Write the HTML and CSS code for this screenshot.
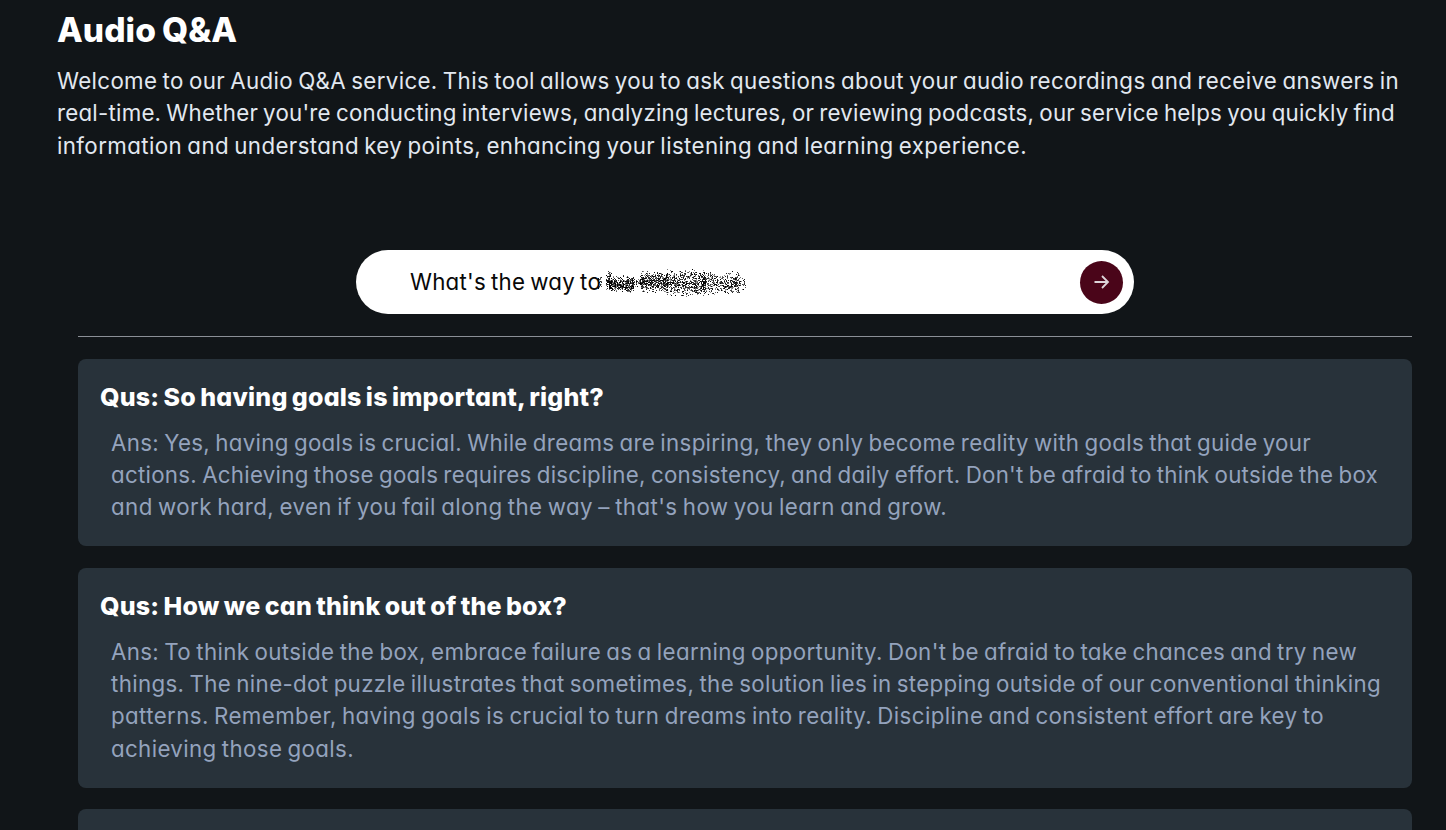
FILE: index.html
```html
<!DOCTYPE html>
<html lang="en">
<head>
<meta charset="utf-8">
<title>Audio Q&amp;A</title>
<link rel="stylesheet" href="styles.css">
</head>
<body>
<main class="page">
  <header class="intro">
    <h1 class="title"><span class="line" data-width="180">Audio Q&amp;A</span></h1>
    <p class="lead">
      <span class="line" data-width="1342">Welcome to our Audio Q&amp;A service. This tool allows you to ask questions about your audio recordings and receive answers in</span>
      <span class="line" data-width="1338">real-time. Whether you're conducting interviews, analyzing lectures, or reviewing podcasts, our service helps you quickly find</span>
      <span class="line" data-width="970">information and understand key points, enhancing your listening and learning experience.</span>
    </p>
  </header>
  <section class="content">
    <form class="ask">
      <span class="query"><span class="line" data-width="191">What's the way to</span></span>
      <canvas class="scribble" width="160" height="44"></canvas>
      <button class="send" type="button" aria-label="Send">
        <svg width="22" height="22" viewBox="0 0 22 22" fill="none" stroke="#ddd5d9" stroke-width="1.8"><path d="M3.5 11H17M11 5L17 11L11 17"/></svg>
      </button>
    </form>
    <hr class="rule">
    <article class="card">
      <h2 class="question"><span class="line" data-width="504">Qus: So having goals is important, right?</span></h2>
      <p class="answer">
        <span class="line" data-width="1200">Ans: Yes, having goals is crucial. While dreams are inspiring, they only become reality with goals that guide your</span>
        <span class="line" data-width="1267">actions. Achieving those goals requires discipline, consistency, and daily effort. Don't be afraid to think outside the box</span>
        <span class="line" data-width="836">and work hard, even if you fail along the way – that's how you learn and grow.</span>
      </p>
    </article>
    <article class="card card-tall">
      <h2 class="question"><span class="line" data-width="467">Qus: How we can think out of the box?</span></h2>
      <p class="answer">
        <span class="line" data-width="1246">Ans: To think outside the box, embrace failure as a learning opportunity. Don't be afraid to take chances and try new</span>
        <span class="line" data-width="1270">things. The nine-dot puzzle illustrates that sometimes, the solution lies in stepping outside of our conventional thinking</span>
        <span class="line" data-width="1213">patterns. Remember, having goals is crucial to turn dreams into reality. Discipline and consistent effort are key to</span>
        <span class="line" data-width="243">achieving those goals.</span>
      </p>
    </article>
    <article class="card card-next"></article>
  </section>
</main>
<script src="app.js"></script>
</body>
</html>
```
FILE: styles.css
```css
* { box-sizing: border-box; margin: 0; padding: 0; }
body {
  background: #111518;
  color: #e2e8f0;
  font-family: Inter, "Open Sans", sans-serif;
  font-feature-settings: "cv11";
  font-optical-sizing: none;
  font-size: 22.3px;
  line-height: 32.4px;
  word-spacing: -1.4px;
  height: 830px;
  overflow: hidden;
}
.page { padding: 5px 34px 0 57px; }
.line { display: block; width: max-content; white-space: nowrap; }
.title { color: #fff; font-size: 33.5px; line-height: 50px; font-weight: 800; }
.lead { margin-top: 10px; }
.content { padding-left: 21px; }
.ask {
  position: relative;
  display: flex;
  align-items: center;
  width: 778px;
  height: 64px;
  margin: 87.8px auto 0;
  padding: 0 11px 0 54px;
  border-radius: 32px;
  background: #fff;
  color: #080808;
}
.query { flex: 1; padding-top: 1px; }
.scribble { position: absolute; left: 240px; top: 11px; }
.send {
  display: grid;
  place-items: center;
  width: 43px;
  height: 43px;
  border: 0;
  border-radius: 50%;
  background: #4a0519;
}
.rule { height: 1px; border: 0; margin: 22px 0; background: #8b8f96; }
.card {
  height: 187px;
  padding: 21.6px 22px;
  border-radius: 8px;
  background: #28323a;
}
.card-tall { margin-top: 22px; height: 220px; }
.card-next { margin-top: 21px; height: 21px; padding: 0; border-radius: 8px 8px 0 0; }
.question { color: #fff; font-size: 25px; line-height: 33.4px; font-weight: 800; }
.answer { margin: 12.5px 0 0 11px; color: #94a3bd; }
```
FILE: app.js
```js
// Spread each line's tracking so that it fills its measure.
document.fonts.ready.then(function () {
  document.querySelectorAll('.line').forEach(function (el) {
    var n = el.textContent.length;
    var gap = (Number(el.dataset.width) - el.getBoundingClientRect().width) / n;
    el.style.letterSpacing = gap.toFixed(4) + 'px';
  });
});

// Spray-brush mark over the end of the query.
var ctx = document.querySelector('.scribble').getContext('2d');
var seed = 17;
function rnd() {
  seed = (seed * 16807) % 2147483647;
  return seed / 2147483647;
}
function spray(x0, x1, sd, count, cy) {
  for (var i = 0; i < count; i++) {
    var g = rnd() + rnd() - 1;
    ctx.fillStyle = 'rgba(0,0,0,' + (0.35 + rnd() * 0.65) + ')';
    ctx.fillRect(Math.floor(x0 + rnd() * (x1 - x0)), Math.floor(cy + g * sd), 1, 1);
  }
}
spray(2, 6, 7, 30, 22);
spray(10, 16, 11, 90, 20);
spray(13, 38, 9, 400, 23);
spray(36, 48, 6, 60, 22);
spray(44, 72, 11, 500, 21);
spray(70, 110, 14, 640, 22);
spray(106, 144, 12, 400, 22);
spray(138, 151, 8, 50, 22);
```
